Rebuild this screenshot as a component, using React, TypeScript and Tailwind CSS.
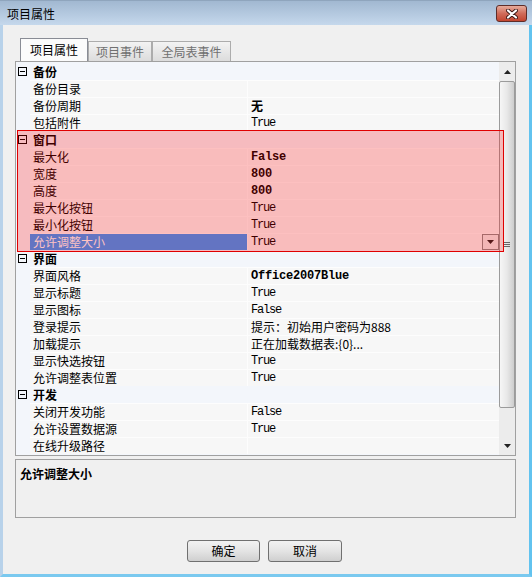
import React from "react";

type Row =
  | { kind: "cat"; label: string }
  | {
      kind: "prop";
      label: string;
      value?: string;
      bold?: boolean;
      cjk?: boolean;
      selected?: boolean;
    };

const rows: Row[] = [
  { kind: "cat", label: "备份" },
  { kind: "prop", label: "备份目录" },
  { kind: "prop", label: "备份周期", value: "无", bold: true, cjk: true },
  { kind: "prop", label: "包括附件", value: "True" },
  { kind: "cat", label: "窗口" },
  { kind: "prop", label: "最大化", value: "False", bold: true },
  { kind: "prop", label: "宽度", value: "800", bold: true },
  { kind: "prop", label: "高度", value: "800", bold: true },
  { kind: "prop", label: "最大化按钮", value: "True" },
  { kind: "prop", label: "最小化按钮", value: "True" },
  { kind: "prop", label: "允许调整大小", value: "True", selected: true },
  { kind: "cat", label: "界面" },
  { kind: "prop", label: "界面风格", value: "Office2007Blue", bold: true },
  { kind: "prop", label: "显示标题", value: "True" },
  { kind: "prop", label: "显示图标", value: "False" },
  { kind: "prop", label: "登录提示", value: "提示：初始用户密码为888", cjk: true },
  { kind: "prop", label: "加载提示", value: "正在加载数据表:{0}...", cjk: true },
  { kind: "prop", label: "显示快选按钮", value: "True" },
  { kind: "prop", label: "允许调整表位置", value: "True" },
  { kind: "cat", label: "开发" },
  { kind: "prop", label: "关闭开发功能", value: "False" },
  { kind: "prop", label: "允许设置数据源", value: "True" },
  { kind: "prop", label: "在线升级路径" },
];

const CJK = "font-['Noto_Sans_CJK_SC',sans-serif]";
const MONO = "font-['Liberation_Mono','Noto_Sans_CJK_SC',monospace]";

function MinusBox() {
  return (
    <svg width="9" height="9" viewBox="0 0 9 9" className="block">
      <rect x="0.5" y="0.5" width="8" height="8" fill="none" stroke="#000" />
      <line x1="2" y1="4.5" x2="7" y2="4.5" stroke="#000" />
    </svg>
  );
}

function Arrow({ up }: { up?: boolean }) {
  return (
    <svg width="7" height="4" viewBox="0 0 7 4" className="block">
      <path d={up ? "M0 4 L3.5 0 L7 4 Z" : "M0 0 L7 0 L3.5 4 Z"} fill="#222" />
    </svg>
  );
}

function GridRow({ row }: { row: Row }) {
  if (row.kind === "cat") {
    return (
      <div className="flex h-[17px] items-center bg-[#f3f6fb]">
        <div className="ml-[2px]">
          <MinusBox />
        </div>
        <span className="ml-[6px] text-[12px] font-bold leading-[17px]">{row.label}</span>
      </div>
    );
  }
  const valueFont = row.cjk
    ? "tracking-normal"
    : row.bold
    ? `${MONO} tracking-[-0.2px]`
    : `${MONO} tracking-[-1.2px]`;
  return (
    <div className="flex h-[17px] bg-[#f3f6fb]">
      <div className="w-[14px] shrink-0" />
      <div className="flex flex-1 border-t border-[#fdfdfd]">
        <div
          className={`w-[217px] shrink-0 pl-[3px] text-[12px] leading-[16px] ${
            row.selected ? "bg-[#3399ff] text-white" : "bg-[#f7f7f7]"
          }`}
        >
          {row.label}
        </div>
        <div className="w-px shrink-0 bg-[#fdfdfd]" />
        <div className="flex flex-1 items-center bg-[#f7f7f7] pl-[3px]">
          <span
            className={`text-[12px] leading-[16px] ${valueFont} ${row.bold ? "font-bold" : ""}`}
          >
            {row.value ?? ""}
          </span>
          {row.selected && (
            <div className="ml-auto flex h-[16px] w-[17px] items-center justify-center border border-[#8a8a8a] bg-[#f0f0f0]">
              <Arrow />
            </div>
          )}
        </div>
      </div>
    </div>
  );
}

function Scrollbar() {
  return (
    <div className="flex w-[16px] shrink-0 flex-col bg-[#ececec]">
      <div className="flex h-[19px] items-center justify-center">
        <Arrow up />
      </div>
      <div className="flex h-[327px] items-center justify-center rounded-[2px] border border-[#9b9b9b] bg-gradient-to-r from-[#f6f6f6] via-[#e8e8e8] to-[#cdcdcd]">
        <svg width="6" height="5" viewBox="0 0 6 5" className="block">
          <line x1="0" y1="0.5" x2="6" y2="0.5" stroke="#666" />
          <line x1="0" y1="2.5" x2="6" y2="2.5" stroke="#666" />
          <line x1="0" y1="4.5" x2="6" y2="4.5" stroke="#666" />
        </svg>
      </div>
      <div className="flex-1" />
      <div className="flex h-[18px] items-center justify-center">
        <Arrow />
      </div>
    </div>
  );
}

function Tab({ label, active, w }: { label: string; active?: boolean; w: string }) {
  return (
    <div
      className={`flex items-center justify-center border-x border-t text-[12px] ${w} ${
        active
          ? "h-[23px] border-[#898c95] bg-[#fbfbfb] text-black"
          : "h-[20px] border-[#acacac] bg-gradient-to-b from-[#f3f3f3] to-[#dcdcdc] text-[#707070]"
      }`}
    >
      {label}
    </div>
  );
}

export default function App() {
  return (
    <div className={`relative flex h-[577px] w-[532px] flex-col bg-[#f0f0f0] text-black ${CJK}`}>
      {/* title bar */}
      <div className="flex h-[25px] shrink-0 items-start justify-between border-t border-[#8fa5bd] bg-gradient-to-b from-[#a1b8d1] to-[#c5d8ec] pl-[7px] pr-[5px]">
        <span className="pt-[4px] text-[12px] leading-[17px]">项目属性</span>
        <div className="mt-[4px] flex h-[17px] w-[31px] items-center justify-center rounded-[3px] border border-[#5e2d29] bg-gradient-to-b from-[#e6ab9b] via-[#d06c5a] to-[#c2452f]">
          <svg width="12" height="10" viewBox="0 0 12 10" className="block">
            <path d="M2 1.5 L10 8.5 M10 1.5 L2 8.5" stroke="#3b1714" strokeWidth="4" strokeLinecap="round" />
            <path d="M2 1.5 L10 8.5 M10 1.5 L2 8.5" stroke="#fff" strokeWidth="2.2" strokeLinecap="round" />
          </svg>
        </div>
      </div>

      {/* body */}
      <div className="flex flex-1 flex-col border-b-[3px] border-l-[3px] border-r-[3px] border-b-[#7ac9ef] border-l-[#b8d2ea] border-r-[#62c3ef] pl-[12px] pt-[13px]">
        <div className="flex items-end pl-[5px]">
          <Tab label="项目属性" active w="w-[68px]" />
          <Tab label="项目事件" w="w-[64px]" />
          <Tab label="全局表事件" w="w-[79px]" />
        </div>

        <div className="flex h-[395px] w-[501px] border border-[#a0a0a0] bg-[#f3f6fb]">
          <div className="w-[483px] shrink-0 pt-px">
            {rows.map((r, i) => (
              <GridRow key={i} row={r} />
            ))}
          </div>
          <Scrollbar />
        </div>

        <div className="mt-[3px] h-[59px] w-[501px] border border-[#a0a0a0] pl-[4px]">
          <span className="text-[12px] font-bold leading-[17px]">允许调整大小</span>
        </div>

        <div className="mt-[22px] flex gap-[8px] pl-[172px]">
          <button className="h-[22px] w-[73px] rounded-[3px] border border-[#707070] bg-gradient-to-b from-[#f2f2f2] via-[#e4e4e4] to-[#cfcfcf] text-[12px]">
            确定
          </button>
          <button className="h-[22px] w-[74px] rounded-[3px] border border-[#707070] bg-gradient-to-b from-[#f2f2f2] via-[#e4e4e4] to-[#cfcfcf] text-[12px]">
            取消
          </button>
        </div>
      </div>

      {/* highlight annotation over the 窗口 group */}
      <div className="pointer-events-none absolute left-[17px] top-[130px] h-[122px] w-[487px] border border-[#e00000] bg-[rgba(255,0,0,0.24)]" />
    </div>
  );
}
